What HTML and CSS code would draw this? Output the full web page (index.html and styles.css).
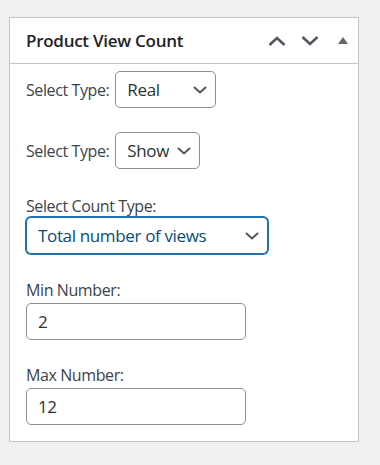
FILE: index.html
```html
<!DOCTYPE html>
<html lang="en">
<head>
<meta charset="utf-8">
<title>Product View Count</title>
<link rel="stylesheet" href="styles.css">
</head>
<body>
<div class="postbox">
  <div class="postbox-header">
    <h2 class="hndle">Product View Count</h2>
    <div class="handle-actions">
      <button class="handle-btn up" aria-label="Move up">
        <svg width="18" height="10" viewBox="0 0 18 10"><polyline points="1.5,9 9,2 16.5,9" fill="none" stroke="currentColor" stroke-width="2.6"/></svg>
      </button>
      <button class="handle-btn down" aria-label="Move down">
        <svg width="18" height="10" viewBox="0 0 18 10"><polyline points="1.5,1 9,8 16.5,1" fill="none" stroke="currentColor" stroke-width="2.6"/></svg>
      </button>
      <button class="handle-btn toggle" aria-label="Toggle panel">
        <svg width="10" height="7" viewBox="0 0 10 7"><polygon points="0,7 5,0 10,7" fill="currentColor"/></svg>
      </button>
    </div>
  </div>
  <div class="inside">
    <div class="row inline first">
      <label class="lbl" for="t1">Select Type:</label>
      <span class="select-wrap w-real">
        <select id="t1" class="sel"><option>Real</option><option>Fake</option></select>
        <svg class="arrow" width="14" height="8" viewBox="0 0 14 8"><polyline points="1,1 7,6.5 13,1" fill="none" stroke="currentColor" stroke-width="2"/></svg>
      </span>
    </div>
    <div class="row inline second">
      <label class="lbl" for="t2">Select Type:</label>
      <span class="select-wrap w-show">
        <select id="t2" class="sel"><option>Show</option><option>Hide</option></select>
        <svg class="arrow" width="14" height="8" viewBox="0 0 14 8"><polyline points="1,1 7,6.5 13,1" fill="none" stroke="currentColor" stroke-width="2"/></svg>
      </span>
    </div>
    <div class="row block third">
      <label class="lbl" for="t3">Select Count Type:</label>
      <span class="select-wrap w-count">
        <select id="t3" class="sel focus"><option>Total number of views</option><option>Unique views</option></select>
        <svg class="arrow" width="14" height="8" viewBox="0 0 14 8"><polyline points="1,1 7,6.5 13,1" fill="none" stroke="currentColor" stroke-width="2"/></svg>
      </span>
    </div>
    <div class="row block fourth">
      <label class="lbl" for="mn">Min Number:</label>
      <input id="mn" class="num" type="text" value="2">
    </div>
    <div class="row block fifth">
      <label class="lbl" for="mx">Max Number:</label>
      <input id="mx" class="num" type="text" value="12">
    </div>
  </div>
</div>
</body>
</html>
```

FILE: styles.css
```css
html, body {
  margin: 0;
  padding: 0;
  background: #f0f0f1;
}
body {
  font-family: "Open Sans", "Noto Sans", "Liberation Sans", sans-serif;
  color: #3c434a;
}
.postbox {
  margin: 17px 0 0 9px;
  width: 348px;
  height: 423px;
  background: #fff;
  border: 1px solid #c3c4c7;
}
.postbox-header {
  height: 45px;
  border-bottom: 1px solid #c3c4c7;
  display: flex;
  align-items: center;
  justify-content: space-between;
  padding: 0 10px 0 16px;
}
.hndle {
  margin: 0;
  font-size: 17px;
  font-weight: 600;
  color: #1d2327;
  letter-spacing: -0.27px;
}
.handle-actions {
  display: flex;
  align-items: center;
}
.handle-btn {
  background: none;
  border: 0;
  padding: 0;
  margin: 0;
  color: #50575e;
  display: flex;
  align-items: center;
  justify-content: center;
  height: 20px;
}
.handle-btn.up,
.handle-btn.down {
  width: 18px;
}
.handle-btn.down {
  margin-left: 15px;
}
.handle-btn.toggle {
  width: 10px;
  margin-left: 19px;
  color: #646970;
}
.inside {
  padding: 0 16px;
}
.row.inline {
  display: flex;
  align-items: center;
}
.row.block {
  display: flex;
  flex-direction: column;
  align-items: flex-start;
}
.first { margin-top: 7px; }
.second { margin-top: 24px; }
.third { margin-top: 27px; }
.fourth { margin-top: 26px; }
.fifth { margin-top: 25px; }
.lbl {
  font-size: 16px;
  line-height: 20px;
  color: #3c434a;
  letter-spacing: -0.4px;
}
.inline .lbl { margin-right: 6px; }
.select-wrap {
  position: relative;
  display: inline-block;
}
.w-real { width: 101px; }
.w-show { width: 85px; }
.w-count { width: 242px; margin-top: 1px; }
.sel {
  -webkit-appearance: none;
  appearance: none;
  box-sizing: border-box;
  width: 100%;
  height: 37px;
  margin: 0;
  padding: 0 30px 0 11px;
  border: 1px solid #8c8f94;
  border-radius: 5px;
  background: #fff;
  font-family: inherit;
  font-size: 17px;
  letter-spacing: -0.35px;
  color: #2c3338;
  outline: none;
}
.sel.focus {
  border-color: #2271b1;
  box-shadow: 0 0 0 1px #2271b1;
  color: #0a4b78;
}
.arrow {
  position: absolute;
  right: 9px;
  top: 15px;
  color: #50575e;
  pointer-events: none;
}
.num {
  box-sizing: border-box;
  width: 220px;
  height: 37px;
  margin: 3px 0 0;
  padding: 0 11px;
  border: 1px solid #8c8f94;
  border-radius: 5px;
  font-family: inherit;
  font-size: 17px;
  letter-spacing: -0.35px;
  color: #2c3338;
  background: #fff;
  outline: none;
}
```
